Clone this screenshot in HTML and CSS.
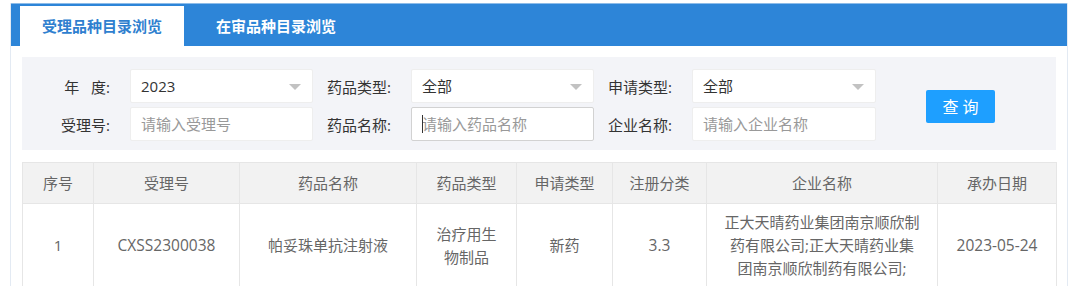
FILE: index.html
```html
<!DOCTYPE html>
<html lang="zh-CN">
<head>
  <meta charset="UTF-8">
  <title>受理品种目录浏览</title>
  <link rel="stylesheet" href="styles.css">
</head>
<body>
  <div class="panel">
    <div class="tabs">
      <div class="tab active">受理品种目录浏览</div>
      <div class="tab">在审品种目录浏览</div>
    </div>

    <div class="content">
      <form class="filters">
        <label class="label">年&nbsp;&nbsp;&nbsp;度:</label>
        <div class="select">2023<span class="arrow"></span></div>
        <label class="label">药品类型:</label>
        <div class="select">全部<span class="arrow"></span></div>
        <label class="label">申请类型:</label>
        <div class="select">全部<span class="arrow"></span></div>
        <div class="btn-cell"><button type="button">查 询</button></div>

        <label class="label">受理号:</label>
        <input type="text" placeholder="请输入受理号">
        <label class="label">药品名称:</label>
        <div class="focus-wrap">
          <input type="text" class="focused" placeholder="请输入药品名称">
          <span class="caret"></span>
        </div>
        <label class="label">企业名称:</label>
        <input type="text" placeholder="请输入企业名称">
      </form>

      <table class="list">
        <colgroup>
          <col style="width:71px">
          <col style="width:146px">
          <col style="width:177px">
          <col style="width:100px">
          <col style="width:96px">
          <col style="width:94px">
          <col style="width:231px">
          <col style="width:119px">
        </colgroup>
        <thead>
          <tr>
            <th>序号</th>
            <th>受理号</th>
            <th>药品名称</th>
            <th>药品类型</th>
            <th>申请类型</th>
            <th>注册分类</th>
            <th>企业名称</th>
            <th>承办日期</th>
          </tr>
        </thead>
        <tbody>
          <tr>
            <td>1</td>
            <td class="latin">CXSS2300038</td>
            <td>帕妥珠单抗注射液</td>
            <td>治疗用生物制品</td>
            <td>新药</td>
            <td class="latin">3.3</td>
            <td class="company">正大天晴药业集团南京顺欣制药有限公司;正大天晴药业集团南京顺欣制药有限公司;</td>
            <td class="latin">2023-05-24</td>
          </tr>
        </tbody>
      </table>
    </div>
  </div>
</body>
</html>
```

FILE: styles.css
```css
body {
  margin: 0;
  padding: 3px 12px 0 10px;
  background-color: #fff;
  font-family: "Open Sans", "Noto Sans CJK SC", sans-serif;
  font-size: 15px;
  color: #333;
}

.panel {
  border-left: 1px solid #e3eaf3;
  border-right: 1px solid #e3eaf3;
  height: 290px;
}

.tabs {
  display: flex;
  align-items: flex-end;
  height: 42px;
  background-color: #2d85d8;
  border-top: 1px solid #8dbce9;
  padding-left: 9px;
}

.tab {
  height: 40px;
  line-height: 40px;
  padding: 0 22px;
  margin-right: 10px;
  color: #fff;
  font-weight: bold;
  font-size: 15px;
}

.tab.active {
  background-color: #fff;
  color: #2f7fcf;
}

.content {
  padding: 11px 11px 0;
}

.filters {
  display: grid;
  grid-template-columns: 108px 183px 98px 183px 98px 184px 1fr;
  grid-template-rows: 34px 34px;
  row-gap: 4px;
  align-items: center;
  background-color: #f3f4f8;
  padding: 12px 0 9px;
  margin: 0;
}

.label {
  text-align: right;
  padding-right: 20px;
  color: #333;
}

.select,
.filters input {
  box-sizing: border-box;
  height: 34px;
  background-color: #fff;
  border: 1px solid #eeeeee;
  border-radius: 2px;
  padding: 0 10px;
  font-family: inherit;
  font-size: 15px;
  color: #333;
}

.select {
  position: relative;
  line-height: 32px;
}

.filters input {
  width: 100%;
  outline: none;
}

.filters input::placeholder {
  color: #999;
}

.arrow {
  position: absolute;
  right: 11px;
  top: 14px;
  border-left: 6px solid transparent;
  border-right: 6px solid transparent;
  border-top: 6px solid #c2c2c2;
}

.focus-wrap {
  position: relative;
}

.filters input.focused {
  border-color: #d2d2d2;
}

.caret {
  position: absolute;
  left: 11px;
  top: 8px;
  width: 1px;
  height: 18px;
  background-color: #333;
}

.btn-cell {
  grid-row: 1 / span 2;
  grid-column: 7;
  padding-left: 50px;
}

button {
  width: 69px;
  height: 33px;
  margin-top: 2px;
  background-color: #1e9fff;
  color: #fff;
  border: none;
  border-radius: 2px;
  font-family: inherit;
  font-size: 16px;
  cursor: pointer;
}

.list {
  width: 1034px;
  margin-top: 12px;
  border-collapse: collapse;
  table-layout: fixed;
  color: #666;
}

.list th,
.list td {
  border: 1px solid #e6e6e6;
  text-align: center;
  padding: 7px 15px;
  font-weight: normal;
  font-size: 15px;
  line-height: 23px;
}

.list th {
  height: 26px;
  background-color: #f2f2f2;
  color: #666;
}

.list td.latin {
  font-size: 15.5px;
}

.list td.company {
  padding: 7px 17px;
}
```
